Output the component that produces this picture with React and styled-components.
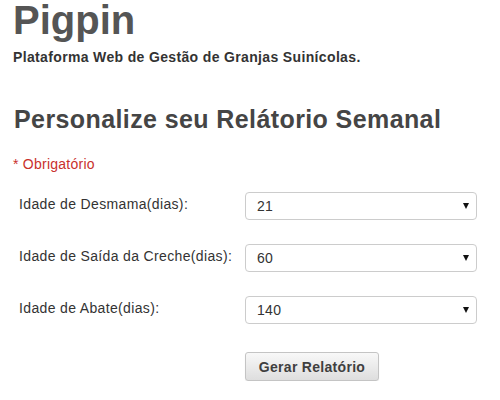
import { Fragment } from "react";
import styled, { createGlobalStyle } from "styled-components";

const GlobalStyle = createGlobalStyle`
  body {
    margin: 0;
    background: #fff;
    font-family: "Liberation Sans", Arial, sans-serif;
    color: #333;
  }
`;

const Page = styled.div`
  padding: 0 13px;
`;

const Brand = styled.h1`
  margin: 0;
  padding-top: 1px;
  font-size: 40px;
  line-height: 38px;
  font-weight: bold;
  color: #555;
`;

const Tagline = styled.p`
  margin: 10px 0 0;
  font-size: 14px;
  line-height: 16px;
  letter-spacing: 0.35px;
  font-weight: bold;
  color: #333;
`;

const Heading = styled.h2`
  margin: 39px 0 0 1px;
  font-size: 25px;
  line-height: 30px;
  letter-spacing: 0.4px;
  font-weight: bold;
  color: #454545;
`;

const Required = styled.p`
  margin: 22px 0 0;
  font-size: 14px;
  line-height: 16px;
  letter-spacing: 0.25px;
  color: #c9302c;
`;

const Form = styled.form`
  margin-top: 20px;
  display: grid;
  grid-template-columns: 232px 232px;
  row-gap: 24px;
  align-items: center;
`;

const Label = styled.label`
  padding: 0 0 4px 6px;
  font-size: 14px;
  letter-spacing: 0.35px;
  color: #333;
`;

const SelectBox = styled.div`
  height: 28px;
  border: 1px solid #ccc;
  border-radius: 4px;
  display: flex;
  align-items: center;
  padding: 0 7px 0 11px;
  font-size: 14px;
  letter-spacing: 0.3px;
  color: #333;
  box-sizing: border-box;
`;

const Arrow = styled.span`
  margin-left: auto;
  width: 0;
  height: 0;
  border-left: 3.5px solid transparent;
  border-right: 3.5px solid transparent;
  border-top: 6px solid #111;
`;

const Button = styled.button`
  grid-column: 2;
  justify-self: start;
  width: 134px;
  height: 29px;
  margin-top: 4px;
  padding: 0;
  border: 1px solid #c4c4c4;
  border-radius: 3px;
  background: linear-gradient(#f8f8f8, #dedede);
  box-shadow: 0 1px 1px rgba(0, 0, 0, 0.08);
  font-family: "Liberation Sans", Arial, sans-serif;
  font-size: 14px;
  letter-spacing: 0.3px;
  font-weight: bold;
  color: #3f3f3f;
`;

const fields = [
  { label: "Idade de Desmama(dias):", value: "21" },
  { label: "Idade de Saída da Creche(dias):", value: "60" },
  { label: "Idade de Abate(dias):", value: "140" },
];

export default function App() {
  return (
    <Page>
      <GlobalStyle />
      <Brand>Pigpin</Brand>
      <Tagline>Plataforma Web de Gestão de Granjas Suinícolas.</Tagline>
      <Heading>Personalize seu Relátorio Semanal</Heading>
      <Required>* Obrigatório</Required>
      <Form>
        {fields.map((f) => (
          <Fragment key={f.label}>
            <Label>{f.label}</Label>
            <SelectBox>
              {f.value}
              <Arrow />
            </SelectBox>
          </Fragment>
        ))}
        <Button type="button">Gerar Relatório</Button>
      </Form>
    </Page>
  );
}
